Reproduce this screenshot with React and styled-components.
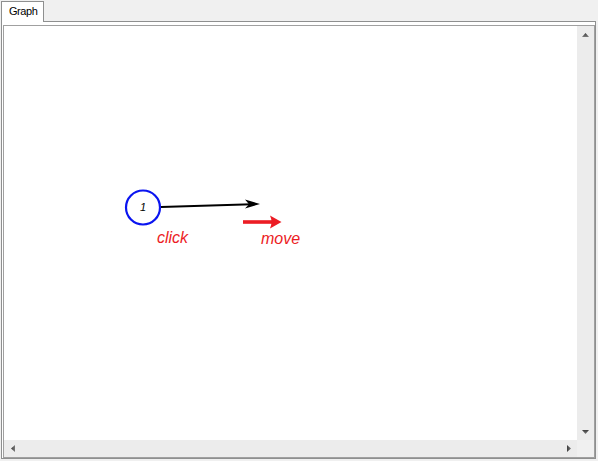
import React from "react";
import styled, { createGlobalStyle } from "styled-components";

const Global = createGlobalStyle`
  html, body { margin: 0; padding: 0; background: #f0f0f0; }
  body { font-family: "Liberation Sans", Arial, sans-serif; }
`;

const Window = styled.div`
  width: 598px;
  height: 461px;
  display: flex;
  flex-direction: column;
  background: #f0f0f0;
`;

const TabStrip = styled.div`
  display: flex;
  margin-top: 1px;
  margin-left: 1px;
  width: 595px;
  height: 21px;
`;

const Tab = styled.div`
  box-sizing: border-box;
  width: 43px;
  height: 21px;
  border: 1px solid #8e8f8f;
  border-bottom: none;
  background: #ffffff;
  padding: 3px 0 0 7px;
  font-size: 11px;
  line-height: 13px;
  letter-spacing: -0.45px;
  color: #000;
`;

const TabFiller = styled.div`
  flex: 1;
  box-sizing: border-box;
  height: 21px;
  border-bottom: 1px solid #8e8f8f;
`;

const Panel = styled.div`
  box-sizing: border-box;
  margin-left: 1px;
  width: 595px;
  height: 437px;
  border: 1px solid #8e8f8f;
  border-top: none;
  background: #ffffff;
  padding: 3px 0 0 1px;
`;

const Frame = styled.div`
  box-sizing: border-box;
  width: 592px;
  height: 433px;
  border: 1px solid #a0a0a0;
  display: grid;
  grid-template-columns: 573px 17px;
  grid-template-rows: 414px 17px;
`;

const Canvas = styled.svg`
  display: block;
  background: #ffffff;
`;

const ScrollBar = styled.div`
  display: flex;
  flex-direction: ${(p) => (p.$vertical ? "column" : "row")};
  justify-content: space-between;
  background: #ececec;
`;

const ScrollButton = styled.div`
  width: 17px;
  height: 17px;
  display: flex;
  align-items: center;
  justify-content: center;
`;

const Corner = styled.div`
  background: #f0f0f0;
`;

const Arrow = ({ dir }) => {
  const pts = {
    up: "0,4 3.5,0 7,4",
    down: "0,0 7,0 3.5,4",
    left: "4,0 4,7 0,3.5",
    right: "0,0 0,7 4,3.5",
  }[dir];
  const vertical = dir === "up" || dir === "down";
  return (
    <svg width={vertical ? 7 : 4} height={vertical ? 4 : 7} style={{ display: "block" }}>
      <defs>
        <linearGradient id={`g-${dir}`} x1="0" y1="0" x2={vertical ? "0" : "1"} y2={vertical ? "1" : "0"}>
          <stop offset="0" stopColor="#3c3c3c" />
          <stop offset="1" stopColor="#7a7a7a" />
        </linearGradient>
      </defs>
      <polygon points={pts} fill={`url(#g-${dir})`} />
    </svg>
  );
};

const GraphDrawing = () => (
  <Canvas width="573" height="414" viewBox="0 0 573 414">
    <line x1="157" y1="181" x2="248" y2="178.3" stroke="#000" strokeWidth="2" />
    <polygon points="256,178 241,173.5 245,178.2 241,182.5" fill="#000" />
    <circle cx="139" cy="181.5" r="17" fill="#fff" stroke="#0a14f0" strokeWidth="2.2" />
    <text
      x="139"
      y="185"
      textAnchor="middle"
      fontFamily="Liberation Sans, Arial, sans-serif"
      fontStyle="italic"
      fontSize="11"
      fill="#000"
    >
      1
    </text>
    <line x1="239" y1="196" x2="269" y2="196" stroke="#ec1c24" strokeWidth="3.6" />
    <path d="M277.5 196 L266 189.5 Q269 196 266 202.5 Z" fill="#ec1c24" />
    <text
      x="153"
      y="217"
      fontFamily="Liberation Sans, Arial, sans-serif"
      fontStyle="italic"
      fontSize="16"
      fill="#ec1c24"
    >
      click
    </text>
    <text
      x="257"
      y="218"
      fontFamily="Liberation Sans, Arial, sans-serif"
      fontStyle="italic"
      fontSize="16"
      fill="#ec1c24"
    >
      move
    </text>
  </Canvas>
);

export default function App() {
  return (
    <>
      <Global />
      <Window>
        <TabStrip>
          <Tab>Graph</Tab>
          <TabFiller />
        </TabStrip>
        <Panel>
          <Frame>
            <GraphDrawing />
            <ScrollBar $vertical>
              <ScrollButton><Arrow dir="up" /></ScrollButton>
              <ScrollButton><Arrow dir="down" /></ScrollButton>
            </ScrollBar>
            <ScrollBar>
              <ScrollButton><Arrow dir="left" /></ScrollButton>
              <ScrollButton><Arrow dir="right" /></ScrollButton>
            </ScrollBar>
            <Corner />
          </Frame>
        </Panel>
      </Window>
    </>
  );
}
